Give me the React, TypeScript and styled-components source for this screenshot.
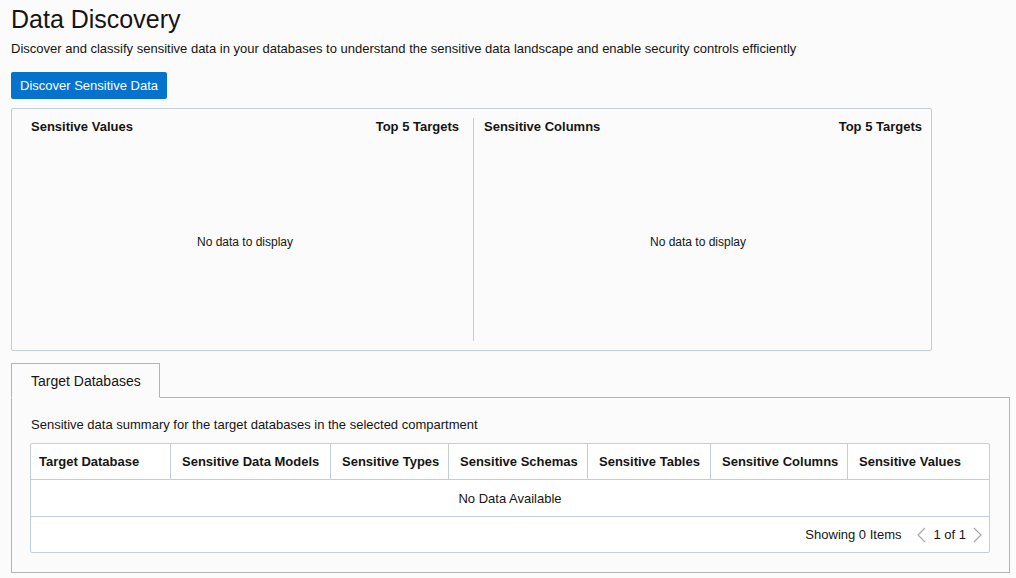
import React from 'react';
import styled, { createGlobalStyle } from 'styled-components';

const GlobalStyle = createGlobalStyle`
  body {
    margin: 0;
    background: #fbfbfb;
    font-family: "Liberation Sans", Arial, sans-serif;
    color: #161513;
  }
`;

const Page = styled.main`
  padding: 4px 6px 0 11px;
`;

const Title = styled.h1`
  margin: 0;
  font-size: 25px;
  font-weight: normal;
  line-height: 30px;
`;

const Intro = styled.p`
  margin: 7px 0 0;
  font-size: 13px;
  line-height: 16px;
`;

const PrimaryButton = styled.button`
  margin-top: 15px;
  height: 27px;
  padding: 0 9px;
  border: none;
  border-radius: 2px;
  background: #0572ce;
  color: #fff;
  font-family: inherit;
  font-size: 13px;
  cursor: pointer;
`;

const ChartPanel = styled.section`
  margin-top: 9px;
  width: 921px;
  height: 243px;
  box-sizing: border-box;
  border: 1px solid #c4ced7;
  border-radius: 2px;
  padding: 9px 0;
  display: grid;
  grid-template-columns: 462px 1fr;
`;

const Chart = styled.div<{ $divider?: boolean }>`
  display: flex;
  flex-direction: column;
  padding: ${p => (p.$divider ? '0 14px 0 19px' : '0 9px 0 10px')};
  border-right: ${p => (p.$divider ? '1px solid #c4ced7' : 'none')};
`;

const ChartHead = styled.div`
  display: flex;
  justify-content: space-between;
  padding-top: 1px;
  font-size: 13px;
  font-weight: bold;
  line-height: 16px;
`;

const ChartBody = styled.div<{ $shift?: number }>`
  flex: 1;
  display: flex;
  align-items: center;
  justify-content: center;
  padding-top: 7px;
  padding-right: ${p => p.$shift ?? 0}px;
  font-size: 12px;
`;

const Tabs = styled.section`
  margin-top: 12px;
`;

const TabBar = styled.div`
  display: flex;
`;

const Tab = styled.div`
  position: relative;
  z-index: 1;
  height: 33px;
  margin-bottom: -1px;
  padding: 0 18px 0 19px;
  border: 1px solid #b4b4b4;
  border-bottom: 1px solid #fbfbfb;
  display: flex;
  align-items: center;
  font-size: 14px;
`;

const TabPanel = styled.div`
  border: 1px solid #b4b4b4;
  padding: 18px 19px 19px 18px;
`;

const Summary = styled.p`
  margin: 0 0 10px 1px;
  padding-top: 1px;
  font-size: 13px;
  line-height: 16px;
`;

const Table = styled.div`
  background: #fff;
  border: 1px solid #c4ced7;
  border-radius: 2px;
  font-size: 13px;
`;

const HeadRow = styled.div`
  display: grid;
  grid-template-columns: 139px 160px 118px 139px 123px 137px 1fr;
  height: 35px;
  border-bottom: 1px solid #c4ced7;
`;

const HeadCell = styled.div<{ $first?: boolean }>`
  display: flex;
  align-items: center;
  padding-left: ${p => (p.$first ? '8px' : '11px')};
  font-weight: bold;
  white-space: nowrap;
  border-left: ${p => (p.$first ? 'none' : '1px solid #c4ced7')};
`;

const EmptyRow = styled.div`
  height: 36px;
  display: flex;
  align-items: center;
  justify-content: center;
  border-bottom: 1px solid #c4ced7;
`;

const Footer = styled.div`
  height: 35px;
  display: flex;
  align-items: center;
  justify-content: flex-end;
  padding-right: 6px;
`;

const Pager = styled.div`
  display: flex;
  align-items: center;
  gap: 6px;
  margin-left: 15px;
`;

const Chevron = ({ dir }: { dir: 'left' | 'right' }) => (
  <svg width="11" height="16" viewBox="0 0 11 16">
    <polyline
      points={dir === 'left' ? '9,1 2,8 9,15' : '2,1 9,8 2,15'}
      fill="none"
      stroke="#a8a8a8"
      strokeWidth="1.2"
    />
  </svg>
);

const columns = [
  'Target Database',
  'Sensitive Data Models',
  'Sensitive Types',
  'Sensitive Schemas',
  'Sensitive Tables',
  'Sensitive Columns',
  'Sensitive Values',
];

export default function App() {
  return (
    <>
      <GlobalStyle />
      <Page>
        <Title>Data Discovery</Title>
        <Intro>
          Discover and classify sensitive data in your databases to understand the sensitive data
          landscape and enable security controls efficiently
        </Intro>
        <PrimaryButton>Discover Sensitive Data</PrimaryButton>

        <ChartPanel>
          <Chart $divider>
            <ChartHead>
              <span>Sensitive Values</span>
              <span>Top 5 Targets</span>
            </ChartHead>
            <ChartBody>No data to display</ChartBody>
          </Chart>
          <Chart>
            <ChartHead>
              <span>Sensitive Columns</span>
              <span>Top 5 Targets</span>
            </ChartHead>
            <ChartBody $shift={10}>No data to display</ChartBody>
          </Chart>
        </ChartPanel>

        <Tabs>
          <TabBar>
            <Tab>Target Databases</Tab>
          </TabBar>
          <TabPanel>
            <Summary>Sensitive data summary for the target databases in the selected compartment</Summary>
            <Table>
              <HeadRow>
                {columns.map((c, i) => (
                  <HeadCell key={c} $first={i === 0}>{c}</HeadCell>
                ))}
              </HeadRow>
              <EmptyRow>No Data Available</EmptyRow>
              <Footer>
                Showing 0 Items
                <Pager>
                  <Chevron dir="left" />
                  <span>1 of 1</span>
                  <Chevron dir="right" />
                </Pager>
              </Footer>
            </Table>
          </TabPanel>
        </Tabs>
      </Page>
    </>
  );
}
